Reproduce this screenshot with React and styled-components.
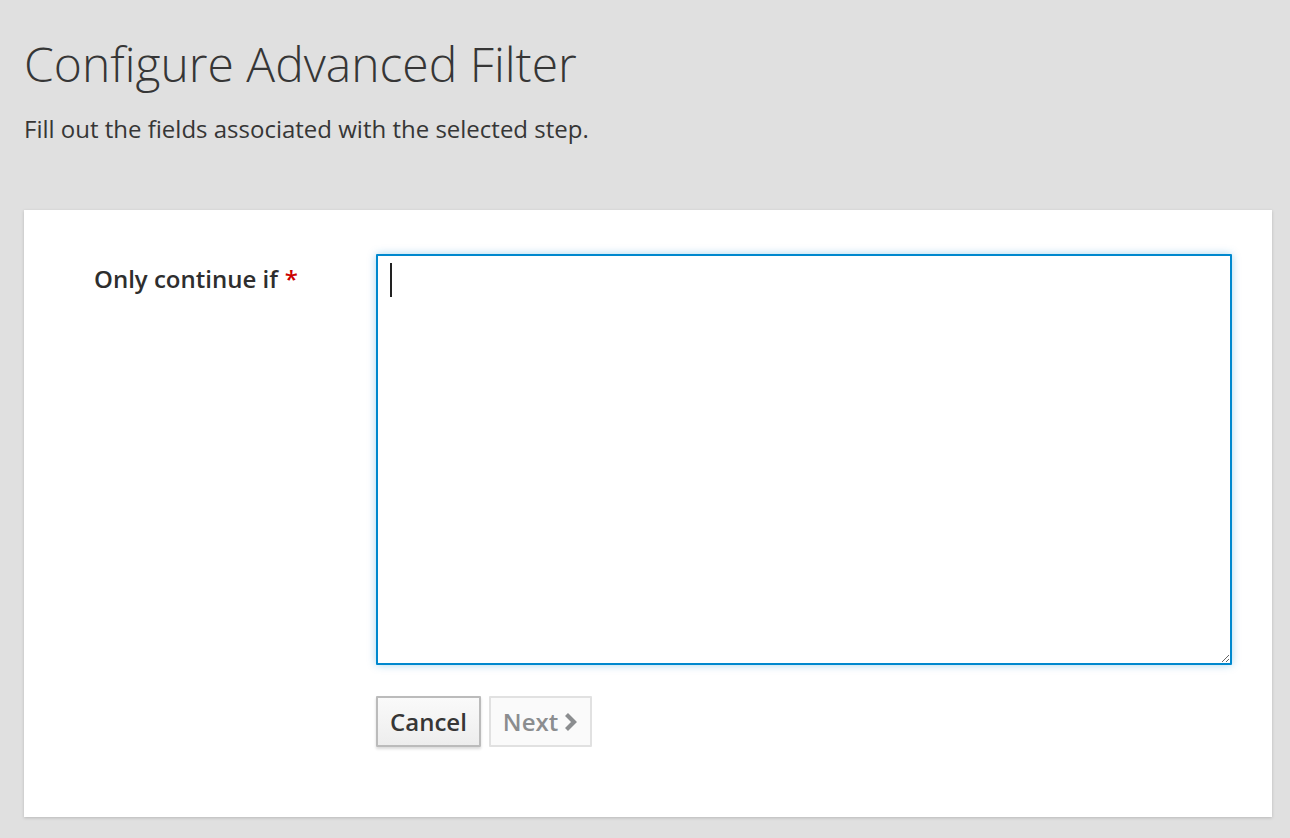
import styled, { createGlobalStyle } from 'styled-components';

const GlobalStyle = createGlobalStyle`
    html, body {
        margin: 0;
        padding: 0;
        background: #e0e0e0;
        font-family: 'Open Sans', 'Noto Sans', sans-serif;
        color: #363636;
    }
`;

const Page = styled.div`
    min-height: 838px;
    padding: 0 18px 0 24px;
    box-sizing: border-box;
`;

const Header = styled.header`
    padding: 36px 0 64px 0;
`;

const Title = styled.h1`
    margin: 0;
    font-size: 48px;
    font-weight: 300;
    line-height: 56px;
    color: #363636;
`;

const Subtitle = styled.p`
    margin: 20px 0 0;
    font-size: 24px;
    line-height: 34px;
    color: #363636;
`;

const Panel = styled.section`
    background: #fff;
    box-shadow: 0 1px 3px rgba(0, 0, 0, 0.18);
    padding: 44px 40px 70px 0;
    height: 607px;
    box-sizing: border-box;
`;

const FormRow = styled.div`
    display: grid;
    grid-template-columns: 352px 1fr;
`;

const Label = styled.label`
    padding: 8px 0 0 70px;
    font-size: 24px;
    font-weight: 600;
    line-height: 34px;
    color: #2e2e2e;
`;

const Required = styled.span`
    color: #c00;
    margin-left: 7px;
`;

const Controls = styled.div`
    display: flex;
    flex-direction: column;
    gap: 31px;
`;

const Field = styled.div`
    position: relative;
    width: 856px;
    height: 411px;
`;

const TextArea = styled.textarea`
    box-sizing: border-box;
    width: 100%;
    height: 100%;
    border: 2px solid #0088ce;
    border-radius: 1px;
    box-shadow: 0 0 8px rgba(0, 136, 206, 0.35);
    padding: 8px 12px;
    font-family: 'Open Sans', sans-serif;
    font-size: 24px;
    outline: none;
    resize: vertical;
    caret-color: transparent;
`;

const Caret = styled.span`
    position: absolute;
    left: 14px;
    top: 9px;
    width: 2px;
    height: 34px;
    background: #222;
    pointer-events: none;
`;

const Buttons = styled.div`
    display: flex;
    gap: 8px;
`;

const Button = styled.button`
    height: 51px;
    padding: 0 12px;
    font-family: 'Open Sans', sans-serif;
    font-size: 24px;
    font-weight: 600;
    border-radius: 1px;
    display: flex;
    align-items: center;
    gap: 6px;
    border: 2px solid ${({ disabled }) => (disabled ? '#e1e1e1' : '#bbb')};
    color: ${({ disabled }) => (disabled ? '#8b8d8f' : '#363636')};
    background: ${({ disabled }) =>
        disabled ? '#fafafa' : 'linear-gradient(#fafafa, #ededed)'};
    box-shadow: ${({ disabled }) =>
        disabled ? 'none' : '0 2px 3px rgba(3, 3, 3, 0.15)'};
`;

const Chevron = () => (
    <svg width='14' height='20' viewBox='0 0 14 20'>
        <path d='M2.5 2.5 L10 10 L2.5 17.5' fill='none' stroke='#8b8d8f' strokeWidth='4.2' />
    </svg>
);

const App = () => (
    <>
        <GlobalStyle />
        <Page>
            <Header>
                <Title>Configure Advanced Filter</Title>
                <Subtitle>Fill out the fields associated with the selected step.</Subtitle>
            </Header>
            <Panel>
                <FormRow>
                    <Label>
                        Only continue if<Required>*</Required>
                    </Label>
                    <Controls>
                        <Field>
                            <TextArea autoFocus />
                            <Caret />
                        </Field>
                        <Buttons>
                            <Button>Cancel</Button>
                            <Button disabled>
                                Next
                                <Chevron />
                            </Button>
                        </Buttons>
                    </Controls>
                </FormRow>
            </Panel>
        </Page>
    </>
);

export default App;
